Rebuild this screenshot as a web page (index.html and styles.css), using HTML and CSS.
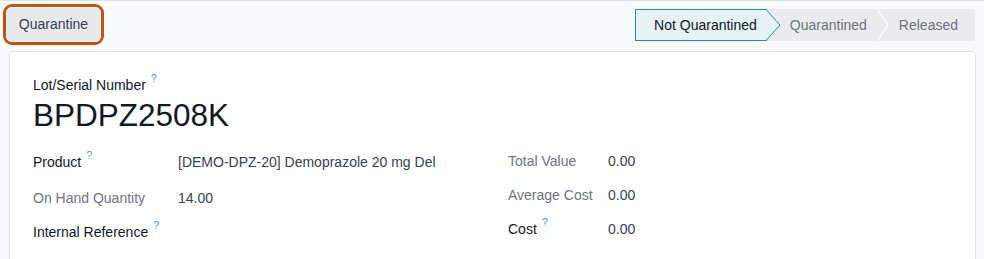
FILE: index.html
```html
<!DOCTYPE html>
<html lang="en">
<head>
<meta charset="utf-8">
<title>Lot/Serial Number</title>
<link rel="stylesheet" href="styles.css">
</head>
<body>
<div class="page">
  <div class="header">
    <div class="highlight">
      <button class="btn">Quarantine</button>
    </div>
    <div class="statusbar">
      <div class="stage active">Not Quarantined
        <svg class="arrow" width="15" height="32" viewBox="0 0 15 32"><path d="M0 0.5 L14 16 L0 31.5" fill="#e6f2f3" stroke="#2b8e98" stroke-width="1"/></svg>
      </div>
      <div class="stage">Quarantined</div>
      <div class="stage sep">
        <svg class="chevron" width="12" height="32" viewBox="0 0 12 32"><path d="M0 0 L11 16 L0 32" fill="none" stroke="#ffffff" stroke-width="1.2"/></svg>
        Released
      </div>
    </div>
  </div>
  <div class="card">
    <div class="lot-label">Lot/Serial Number<sup class="help">?</sup></div>
    <h1 class="title">BPDPZ2508K</h1>
    <div class="fields">
      <div class="group left">
        <div class="row tall"><span class="lbl strong">Product<sup class="help">?</sup></span><span class="val">[DEMO-DPZ-20] Demoprazole 20 mg Del</span></div>
        <div class="row"><span class="lbl">On Hand Quantity</span><span class="val">14.00</span></div>
        <div class="row"><span class="lbl strong">Internal Reference<sup class="help">?</sup></span><span class="val"></span></div>
      </div>
      <div class="group right">
        <div class="row"><span class="lbl">Total Value</span><span class="val">0.00</span></div>
        <div class="row"><span class="lbl">Average Cost</span><span class="val">0.00</span></div>
        <div class="row"><span class="lbl strong">Cost<sup class="help">?</sup></span><span class="val">0.00</span></div>
      </div>
    </div>
  </div>
</div>
</body>
</html>
```

FILE: styles.css
```css
* { box-sizing: border-box; }
html, body { margin: 0; padding: 0; }
body {
  background: #f9fafb;
  font-family: "Liberation Sans", Arial, sans-serif;
  font-size: 14px;
  color: #374151;
}
.page {
  border-top: 1px solid #dee2e6;
  padding-bottom: 40px;
}
.header {
  display: flex;
  justify-content: space-between;
  align-items: flex-start;
  padding: 3px 9px 0 3px;
}
.highlight {
  width: 101px;
  height: 41px;
  border: 3px solid #c2530a;
  border-radius: 9px;
  padding: 0;
  overflow: hidden;
}
.btn {
  display: block;
  width: 100%;
  height: 100%;
  margin: 0;
  border: 1px solid #f4f5f7;
  border-radius: 5px;
  background: #e7e9ed;
  color: #374151;
  font-family: "Liberation Sans", Arial, sans-serif;
  font-size: 14px;
  padding: 0 0 1px 0;
}
.statusbar {
  display: flex;
  margin-top: 5px;
  height: 32px;
  background: #e9ecef;
  border-radius: 0 2px 2px 0;
}
.stage {
  position: relative;
  display: flex;
  align-items: center;
  height: 32px;
  color: #6c757d;
  line-height: 20px;
}
.stage.active {
  background: #e6f2f3;
  border: 1px solid #2b8e98;
  border-right: none;
  color: #111827;
  padding: 0 10px 0 18px;
  z-index: 1;
}
.arrow {
  position: absolute;
  top: -1px;
  right: -14px;
}
.stage:nth-child(2) {
  padding: 0 0 0 23px;
  width: 110px;
}
.stage.sep {
  padding: 0 17px 0 22px;
}
.chevron {
  position: absolute;
  left: 0;
  top: 0;
}
.card {
  margin: 6px 8px 0 9px;
  background: #ffffff;
  border: 1px solid #dee2e6;
  border-radius: 4px;
  padding: 23px 23px 30px 23px;
  min-height: 260px;
}
.lot-label {
  line-height: 21px;
  color: #111827;
}
.help {
  color: #3f9fd6;
  font-size: 11px;
  vertical-align: top;
  position: relative;
  top: -2px;
  margin-left: 5px;
  line-height: 1;
}
.title {
  margin: 0;
  font-size: 31.5px;
  font-weight: 400;
  line-height: 38px;
  color: #111827;
}
.fields {
  display: grid;
  grid-template-columns: 475px 1fr;
  margin-top: 17px;
}
.group.left { padding-top: 1px; }
.row {
  display: grid;
  height: 34px;
  line-height: 21px;
}
.left .row { grid-template-columns: 145px 1fr; }
.right .row { grid-template-columns: 100px 1fr; }
.row.tall { height: 36px; }
.lbl { color: #6c757d; white-space: nowrap; }
.lbl.strong { color: #111827; }
.val { color: #374151; }
```
